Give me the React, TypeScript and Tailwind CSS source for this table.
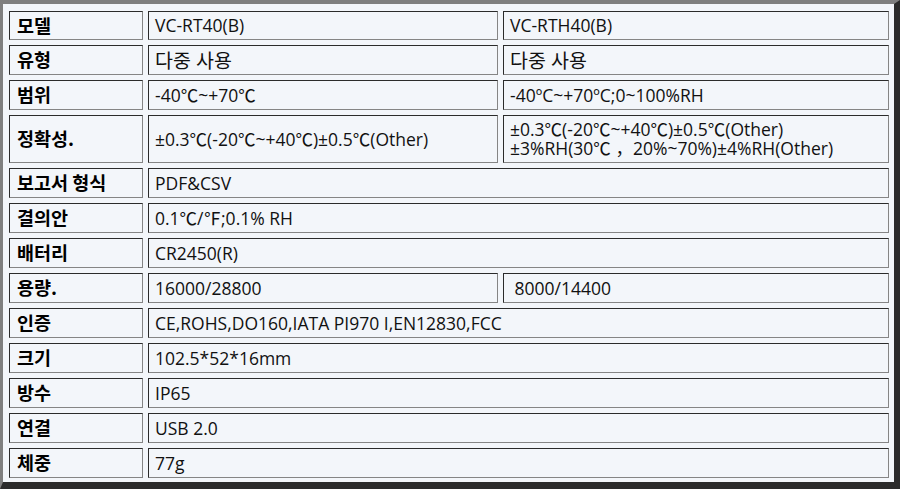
import React from 'react';

type Row = {
  label: string;
  values: string[];
};

const rows: Row[] = [
  { label: '모델', values: ['VC-RT40(B)', 'VC-RTH40(B)'] },
  { label: '유형', values: ['다중 사용', '다중 사용'] },
  { label: '범위', values: ['-40℃~+70℃', '-40ºC~+70ºC;0~100%RH'] },
  {
    label: '정확성.',
    values: ['±0.3℃(-20℃~+40℃)±0.5℃(Other)', '±0.3℃(-20℃~+40℃)±0.5℃(Other)\n±3%RH(30℃ ，20%~70%)±4%RH(Other)'],
  },
  { label: '보고서 형식', values: ['PDF&CSV'] },
  { label: '결의안', values: ['0.1℃/℉;0.1% RH'] },
  { label: '배터리', values: ['CR2450(R)'] },
  { label: '용량.', values: ['16000/28800', ' 8000/14400'] },
  { label: '인증', values: ['CE,ROHS,DO160,IATA  PI970 I,EN12830,FCC'] },
  { label: '크기', values: ['102.5*52*16mm'] },
  { label: '방수', values: ['IP65'] },
  { label: '연결', values: ['USB 2.0'] },
  { label: '체중', values: ['77g'] },
];

const cell =
  'flex items-center border border-t-[#2b2b2b] border-l-[#2b2b2b] border-r-[#858585] border-b-[#858585] bg-[#f3f6fa]';

// korean-only values render a bit bigger in the original
const isHangul = (s: string) => /^[\uac00-\ud7a3\s]+$/.test(s);

const App: React.FC = () => {
  return (
    <div className="w-[900px] h-[489px] bg-[#f3f6fa] border-t-[4px] border-l-[3px] border-r-[6px] border-b-[7px] border-t-[#7f7f7f] border-l-[#7f7f7f] border-r-[#2b2b2b] border-b-[#2b2b2b] pt-[7px] pl-[6px]">
      <div className="grid grid-cols-[134px_350px_386px] grid-rows-[29px_30px_30px_48px_repeat(9,30px)] gap-[5px] text-[#111] font-['Open_Sans','Noto_Sans_CJK_KR',sans-serif]">
        {rows.map(row => (
          <React.Fragment key={row.label}>
            <div className={`${cell} pl-[7px] font-['Noto_Sans_CJK_KR',sans-serif] font-bold text-[18.5px] text-black`}>
              {row.label}
            </div>
            {row.values.length === 1 ? (
              <div className={`${cell} col-span-2 pl-[6px] text-[17.5px]`}>{row.values[0]}</div>
            ) : (
              row.values.map((v, i) => (
                <div
                  key={i}
                  className={`${cell} pl-[6px] whitespace-pre leading-[19px] ${isHangul(v) ? 'text-[19.5px]' : 'text-[17.5px]'}`}
                >
                  {v}
                </div>
              ))
            )}
          </React.Fragment>
        ))}
      </div>
    </div>
  );
};

export default App;
